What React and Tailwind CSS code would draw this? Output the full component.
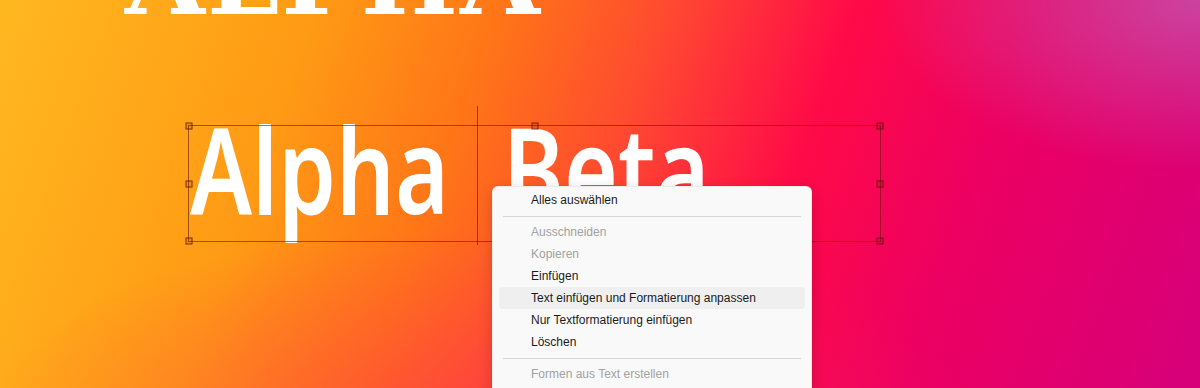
import React from 'react'

const items = [
  { label: 'Alles auswählen' },
  { sep: true },
  { label: 'Ausschneiden', disabled: true },
  { label: 'Kopieren', disabled: true },
  { label: 'Einfügen' },
  { label: 'Text einfügen und Formatierung anpassen', active: true },
  { label: 'Nur Textformatierung einfügen' },
  { label: 'Löschen' },
  { sep: true },
  { label: 'Formen aus Text erstellen', disabled: true },
]

const Handle = ({ className }) => (
  <div className={`absolute w-[7px] h-[7px] border border-[rgba(90,20,10,0.75)] bg-[rgba(120,30,10,0.15)] -translate-x-1/2 -translate-y-1/2 ${className}`} />
)

const ContextMenu = () => (
  <div className="absolute left-[492px] top-[186px] w-[320px] bg-[#f9f9f9] rounded-[6px] border border-[rgba(0,0,0,0.06)] shadow-[0_4px_14px_rgba(0,0,0,0.18)] pt-[2px] pb-[10px] font-['Liberation_Sans',Arial,sans-serif] text-[12px]">
    {items.map((it, i) =>
      it.sep ? (
        <div key={i} className="h-[10px] flex items-center px-[10px]">
          <div className="h-px w-full bg-[#d6d6d6]" />
        </div>
      ) : (
        <div
          key={i}
          className={`h-[22px] mx-[6px] pl-[32px] flex items-center rounded-[4px] ${it.active ? 'bg-[#efefef]' : ''} ${it.disabled ? 'text-[#a2a2a2]' : 'text-[#1b1b1b]'}`}
        >
          {it.label}
        </div>
      )
    )}
  </div>
)

export default function App() {
  return (
    <div className="relative w-full h-[388px] overflow-hidden bg-[radial-gradient(ellipse_320px_170px_at_100%_0%,rgba(195,95,180,0.7),rgba(195,95,180,0)),radial-gradient(ellipse_500px_200px_at_40%_110%,rgba(255,40,90,0.45),rgba(255,40,90,0)),linear-gradient(110deg,#ffb820_0%,#ff9a14_24%,#ff7418_38%,#ff4a30_50%,#ff0a48_64%,#ec0062_78%,#d6007a_100%)]">
      {/* top serif heading, cut by the viewport */}
      <div className="absolute left-[125px] top-[-74px] text-white font-['DejaVu_Serif',serif] font-bold text-[103px] leading-none tracking-[2px] whitespace-nowrap">
        ALPHA
      </div>

      {/* text object */}
      <div className="absolute left-[190px] top-[108px] text-white font-['Noto_Sans',sans-serif] font-semibold text-[120px] leading-none whitespace-nowrap origin-left scale-x-[0.77]">
        Alpha
      </div>
      <div className="absolute left-[503px] top-[108px] text-white font-['Noto_Sans',sans-serif] font-semibold text-[120px] leading-none whitespace-nowrap origin-left scale-x-[0.77]">
        Beta
      </div>

      {/* column divider */}
      <div className="absolute left-[477px] top-[106px] w-px h-[139px] bg-[rgba(90,20,10,0.6)]" />

      {/* selection frame */}
      <div className="absolute left-[188px] top-[125px] w-[693px] h-[117px] border-[1.5px] border-[rgba(100,25,10,0.6)]">
        <Handle className="left-0 top-0" />
        <Handle className="left-0 top-1/2" />
        <Handle className="left-0 top-full" />
        <Handle className="left-1/2 top-0" />
        <Handle className="left-1/2 top-full" />
        <Handle className="left-full top-0" />
        <Handle className="left-full top-1/2" />
        <Handle className="left-full top-full" />
      </div>

      <ContextMenu />
    </div>
  )
}
